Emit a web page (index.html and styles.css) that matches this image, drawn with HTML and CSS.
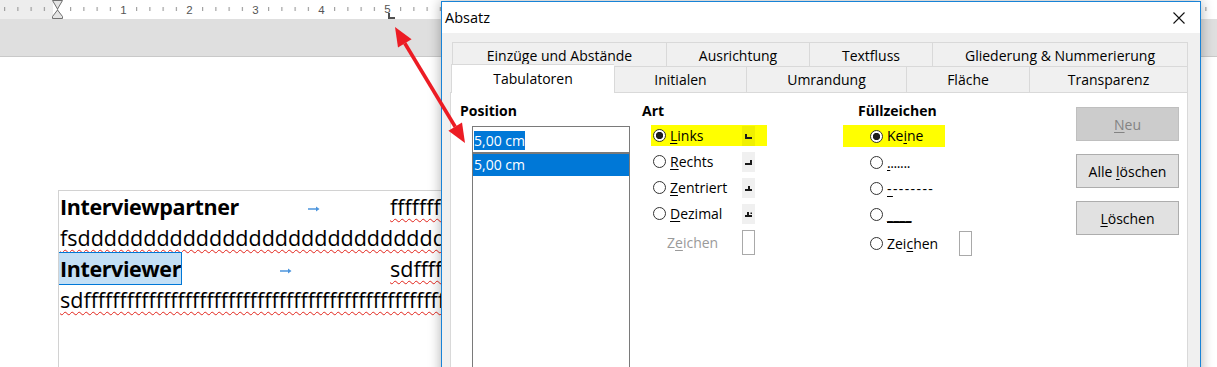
FILE: index.html
```html
<!DOCTYPE html>
<html lang="de">
<head>
<meta charset="utf-8">
<title>Absatz – Tabulatoren</title>
<link rel="stylesheet" href="styles.css">
</head>
<body>
<div class="app">
  <div class="ruler">
    <svg width="1217" height="19" viewBox="0 0 1217 19">
      <defs>
        <pattern id="ticks" x="57" y="0" width="13.2" height="19" patternUnits="userSpaceOnUse">
          <rect x="0" y="7" width="1" height="4" fill="#8f8f8f"/>
        </pattern>
      </defs>
      <rect x="0" y="0" width="1217" height="19" fill="#ffffff"/>
      <rect x="0" y="0" width="53" height="19" fill="#ededed"/>
      <rect x="0" y="0" width="1217" height="19" fill="url(#ticks)"/>
      <g class="rnum">
        <rect x="119" y="2" width="9" height="15" fill="#fff"/><text x="123.5" y="13.5">1</text>
        <rect x="185" y="2" width="9" height="15" fill="#fff"/><text x="189.5" y="13.5">2</text>
        <rect x="251" y="2" width="9" height="15" fill="#fff"/><text x="255.5" y="13.5">3</text>
        <rect x="317" y="2" width="9" height="15" fill="#fff"/><text x="321.5" y="13.5">4</text>
        <rect x="383" y="2" width="9" height="11" fill="#fff"/><text x="387.5" y="12.5">5</text>
      </g>
      <path d="M52.5 0.5H62.5L57.5 9Z" fill="#e4e4e4" stroke="#707070" stroke-width="1"/>
      <path d="M57.5 10L62.5 16.5V18.5H52.5V16.5Z" fill="#e4e4e4" stroke="#707070" stroke-width="1"/>
      <path d="M388 13H390V17H395V19H388Z" fill="#505050"/>
    </svg>
  </div>
  <div class="band"></div>
  <div class="page">
    <div class="frame">
      <div class="line">
        <div class="tabcell"><b class="bold">Interviewpartner</b><span class="tabgap"><svg class="tabarrow" width="12" height="6" viewBox="0 0 12 6"><path d="M0 3H9" stroke="#4b94dd" stroke-width="1.5"/><path d="M8 0.5L11.5 3L8 5.5Z" fill="#4b94dd"/></svg></span></div>
        <span class="wavy">ffffffffff</span>
      </div>
      <div class="line"><span class="wavy">fsdddddddddddddddddddddddddddd</span></div>
      <div class="line">
        <div class="tabcell"><b class="bold sel">Interviewer</b><span class="tabgap"><svg class="tabarrow" width="12" height="6" viewBox="0 0 12 6"><path d="M0 3H9" stroke="#4b94dd" stroke-width="1.5"/><path d="M8 0.5L11.5 3L8 5.5Z" fill="#4b94dd"/></svg></span></div>
        <span class="wavy">sdffffffff</span>
      </div>
      <div class="line"><span class="wavy">sdffffffffffffffffffffffffffffffffffffffffffffffffff</span></div>
    </div>
  </div>

  <div class="dialog">
    <div class="titlebar">
      <span class="title">Absatz</span>
      <svg class="close" width="12" height="12" viewBox="0 0 12 12"><path d="M0.5 0.5L11.5 11.5M11.5 0.5L0.5 11.5" stroke="#111" stroke-width="1.1"/></svg>
    </div>
    <div class="dbody">
      <div class="tabrow row1">
        <div class="tab">Einzüge und Abstände</div>
        <div class="tab">Ausrichtung</div>
        <div class="tab">Textfluss</div>
        <div class="tab">Gliederung &amp; Nummerierung</div>
      </div>
      <div class="tabrow row2">
        <div class="tab active">Tabulatoren</div>
        <div class="tab">Initialen</div>
        <div class="tab">Umrandung</div>
        <div class="tab">Fläche</div>
        <div class="tab">Transparenz</div>
      </div>
      <div class="panel">
        <section class="col col-pos">
          <div class="label">Position</div>
          <div class="field"><span class="seltext">5,00 cm</span></div>
          <div class="list"><div class="item selected">5,00 cm</div></div>
        </section>
        <section class="col col-art">
          <div class="label">Art</div>
          <div class="opts">
            <div class="opt hl"><span class="radio on"></span><span class="txt"><u>L</u>inks</span><span class="ico"><svg width="13" height="20" viewBox="0 0 13 20"><path d="M3 8H5V11H10V13H3Z"/></svg></span></div>
            <div class="opt"><span class="radio"></span><span class="txt"><u>R</u>echts</span><span class="ico"><svg width="13" height="20" viewBox="0 0 13 20"><path d="M8 8H10V13H3V11H8Z"/></svg></span></div>
            <div class="opt"><span class="radio"></span><span class="txt"><u>Z</u>entriert</span><span class="ico"><svg width="13" height="20" viewBox="0 0 13 20"><path d="M6 8H8V11H10V13H3V11H6Z"/></svg></span></div>
            <div class="opt"><span class="radio"></span><span class="txt"><u>D</u>ezimal</span><span class="ico"><svg width="13" height="20" viewBox="0 0 13 20"><path d="M5 8H7V11H10V13H3V11H5Z"/><rect x="8.5" y="8.5" width="1.5" height="1.5"/></svg></span></div>
            <div class="opt charrow"><span class="txt dis">Z<u>e</u>ichen</span><span class="charbox"></span></div>
          </div>
        </section>
        <section class="col col-fill">
          <div class="label">Füllzeichen</div>
          <div class="opts">
            <div class="opt hl first"><span class="radio on"></span><span class="txt">Ke<u>i</u>ne</span><span></span></div>
            <div class="opt"><span class="radio"></span><span class="txt dots"><u>.</u>......</span><span></span></div>
            <div class="opt"><span class="radio"></span><span class="txt dashes"><u>-</u>-------</span><span></span></div>
            <div class="opt"><span class="radio"></span><span class="txt"><u>____</u></span><span></span></div>
            <div class="opt charrow"><span class="radio"></span><span class="txt">Zei<u>c</u>hen</span><span class="charbox"></span></div>
          </div>
        </section>
        <section class="col col-btns">
          <button class="btn" disabled><u>N</u>eu</button>
          <button class="btn">Alle <u>l</u>öschen</button>
          <button class="btn"><u>L</u>öschen</button>
        </section>
      </div>
    </div>
  </div>

  <svg class="arrow" width="1217" height="367" viewBox="0 0 1217 367">
    <path d="M404.8 43.3L455.2 126.7" stroke="#ec1c24" stroke-width="3.6"/>
    <path d="M395 27L411.6 39.2L398 47.4Z" fill="#ec1c24"/>
    <path d="M465 143L462 122.6L448.4 130.8Z" fill="#ec1c24"/>
  </svg>
</div>
</body>
</html>
```

FILE: styles.css
```css
* { box-sizing: border-box; }

html, body {
  margin: 0;
  padding: 0;
  background: #ffffff;
}

body {
  width: 1217px;
  height: 367px;
  overflow: hidden;
  font-family: "Open Sans", "Noto Sans", sans-serif;
}

.app {
  position: relative;
  width: 1217px;
  height: 367px;
  overflow: hidden;
}

/* ---------- document window ---------- */
.ruler { height: 19px; }
.ruler svg { display: block; }
.rnum text {
  font-family: "Liberation Sans", Arial, sans-serif;
  font-size: 11.5px;
  fill: #555555;
  text-anchor: middle;
}

.band {
  height: 38px;
  background: #dfdfdf;
  border-bottom: 1px solid #c9c9c9;
}

.page {
  height: 310px;
  background: #ffffff;
  padding-top: 133px;
}

.frame {
  margin-left: 58px;
  width: 386px;
  height: 200px;
  overflow: hidden;
  border-top: 1px solid #d2d2d2;
  border-left: 1px solid #d2d2d2;
  padding-left: 1px;
  font-family: "Open Sans", sans-serif;
  font-size: 21.5px;
  color: #000000;
}

.line {
  display: flex;
  height: 31px;
  line-height: 31px;
  white-space: nowrap;
}

.tabcell {
  display: flex;
  flex: none;
  width: 330px;
}

.bold {
  font-weight: 700;
  letter-spacing: -0.4px;
}

.sel {
  display: inline-block;
  height: 31px;
  margin-left: -1px;
  padding-left: 1px;
  background: #c3dff5;
  outline: 1px solid #0078d7;
}

.tabgap {
  flex: 1;
  display: flex;
  justify-content: center;
  align-items: flex-start;
  padding-top: 15px;
}

.tabarrow { display: block; }

.wavy {
  text-decoration: underline wavy #e2231a;
  text-decoration-thickness: 1px;
  text-underline-offset: 3px;
}

/* ---------- dialog ---------- */
.dialog {
  position: absolute;
  left: 441px;
  top: 1px;
  width: 760px;
  height: 380px;
  border: 1px solid #1883d7;
  background: #f0f0f0;
  box-shadow: 0 0 12px rgba(0, 0, 0, 0.32);
  font-family: "Open Sans", "Noto Sans", sans-serif;
  font-size: 14px;
  color: #000000;
}

.titlebar {
  height: 31px;
  background: #ffffff;
  display: flex;
  align-items: center;
  justify-content: space-between;
  padding: 0 15px 0 3px;
}

.title { font-size: 14.5px; }
.close { display: block; }

.dbody { padding: 9px 0 0 8px; }

.tabrow { display: grid; }
.row1 {
  margin-left: 2px;
  grid-template-columns: 214px 143px 123px 256px;
}
.row2 {
  margin-left: 1px;
  grid-template-columns: 163px 132px 160px 123px 159px;
}

.tab {
  display: flex;
  align-items: center;
  justify-content: center;
  white-space: nowrap;
  background: #f0f0f0;
  border-top: 1px solid #d9d9d9;
  border-left: 1px solid #d9d9d9;
}
.tab:last-child { border-right: 1px solid #d9d9d9; }
.row1 .tab { height: 24px; padding-top: 1px; }
.row2 .tab { height: 26px; }

.tab.active {
  position: relative;
  z-index: 1;
  height: 29px;
  margin-top: -2px;
  margin-bottom: -1px;
  background: #ffffff;
  padding-bottom: 2px;
}

.panel {
  display: flex;
  width: 738px;
  height: 300px;
  background: #ffffff;
  border: 1px solid #d9d9d9;
  padding-top: 8px;
}

.label {
  height: 20px;
  line-height: 20px;
  font-weight: 700;
}

.col-pos { width: 191px; padding-left: 9px; }
.col-art { width: 201px; }
.col-fill { width: 233px; }
.col-fill .label { padding-left: 15px; }

.field {
  margin: 5px 0 0 12px;
  width: 158px;
  height: 27px;
  border: 1px solid #7a7a7a;
  padding: 4px 0 0 1px;
}

.seltext {
  display: inline-block;
  height: 19px;
  line-height: 19px;
  background: #0078d7;
  color: #ffffff;
}

.list {
  margin-left: 12px;
  width: 158px;
  height: 260px;
  border: 1px solid #7a7a7a;
}

.item {
  height: 22px;
  line-height: 22px;
  padding-left: 1px;
}
.item.selected {
  background: #0078d7;
  color: #ffffff;
}

.opts {
  margin-top: 4px;
  display: flex;
  flex-direction: column;
  gap: 5px;
  align-items: flex-start;
}

.col-art .opts { padding-left: 9px; }

.opt {
  display: grid;
  grid-template-columns: 13px 68px 13px;
  column-gap: 4px;
  align-items: center;
  height: 21px;
  padding: 0 12px 0 2px;
}

.col-fill .opt {
  padding-left: 27px;
  padding-right: 0;
}
.col-fill .opt.first {
  height: 22px;
  width: 102px;
}

.opt.hl { background: #ffff00; }

.opt.charrow {
  height: 25px;
  margin-top: 1px;
}
.col-art .charrow .txt {
  grid-column: 1 / 3;
  padding-left: 14px;
}
.col-art .charrow .charbox { grid-column: 3; }

.txt {
  white-space: nowrap;
  line-height: 20px;
}
.txt u { text-underline-offset: 2px; }
.txt.dis { color: #9a9a9a; }
.dots { letter-spacing: -0.4px; }
.dashes { letter-spacing: 1.4px; }

.radio {
  width: 13px;
  height: 13px;
  border-radius: 50%;
  border: 1px solid #333333;
  background: #ffffff;
}
.radio.on {
  background: radial-gradient(circle at center, #1e1e1e 0 3.4px, #ffffff 3.9px);
}

.ico {
  width: 13px;
  height: 20px;
  background: rgba(0, 0, 0, 0.06);
}
.ico svg { display: block; fill: #1a1a1a; }

.charbox {
  width: 13px;
  height: 25px;
  background: #ffffff;
  border: 1px solid #a9a9a9;
}

.col-btns {
  width: 103px;
  padding-top: 6px;
  display: flex;
  flex-direction: column;
  gap: 13px;
}

.btn {
  height: 34px;
  width: 103px;
  border: 1px solid #adadad;
  background: #e1e1e1;
  font-family: "Open Sans", "Noto Sans", sans-serif;
  font-size: 14px;
  color: #000000;
  padding: 0;
}
.btn u { text-underline-offset: 2px; }
.btn:disabled {
  background: #cccccc;
  border-color: #bfbfbf;
  color: #838383;
}

.arrow {
  position: absolute;
  left: 0;
  top: 0;
  z-index: 5;
  pointer-events: none;
}
```
